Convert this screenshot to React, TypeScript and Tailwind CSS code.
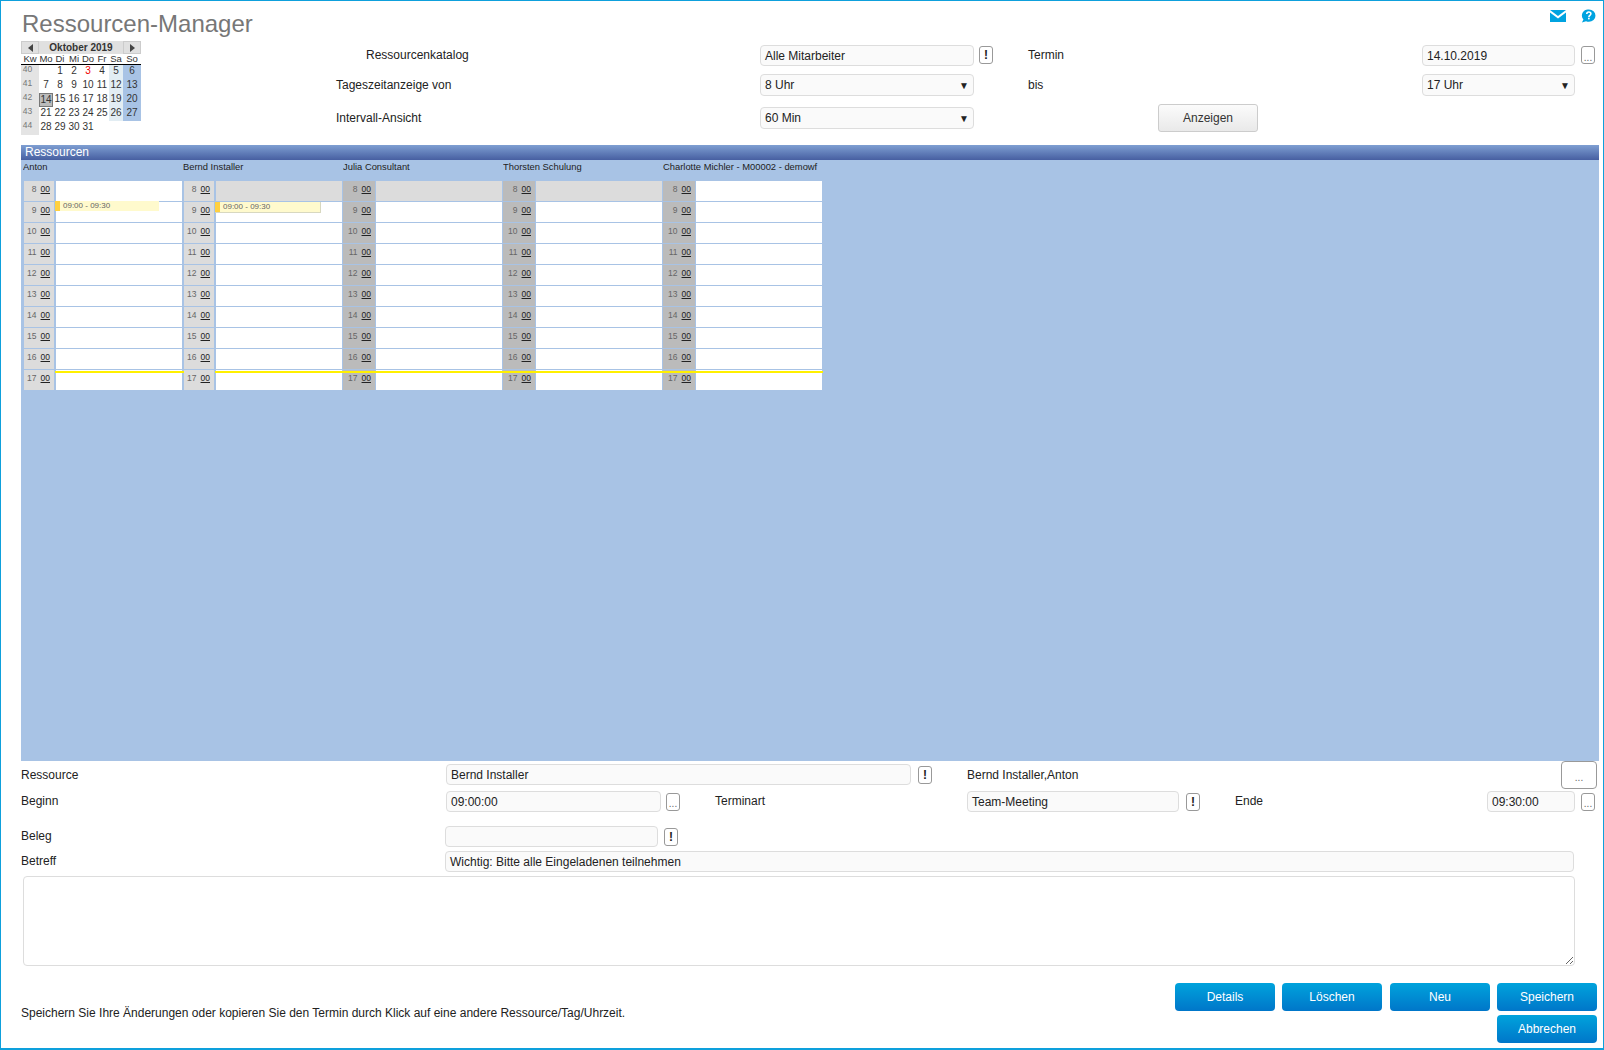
import React from 'react';

const WEEKS: { kw: number; days: (number | null)[] }[] = [
  { kw: 40, days: [null, 1, 2, 3, 4, 5, 6] },
  { kw: 41, days: [7, 8, 9, 10, 11, 12, 13] },
  { kw: 42, days: [14, 15, 16, 17, 18, 19, 20] },
  { kw: 43, days: [21, 22, 23, 24, 25, 26, 27] },
  { kw: 44, days: [28, 29, 30, 31, null, null, null] },
];

const HOURS = [8, 9, 10, 11, 12, 13, 14, 15, 16, 17];

const RESOURCES = [
  { name: 'Anton', light: true, firstBusy: false, event: 'plain' },
  { name: 'Bernd Installer', light: true, firstBusy: true, event: 'shadow' },
  { name: 'Julia Consultant', light: false, firstBusy: true, event: '' },
  { name: 'Thorsten Schulung', light: false, firstBusy: true, event: '' },
  { name: 'Charlotte Michler - M00002 - demowf', light: false, firstBusy: false, event: '' },
];

const Calendar = () => (
  <div className="w-[120px] shrink-0 text-[#333]">
    <div className="flex h-[13px] bg-[#e0e0e0]">
      <div className="flex h-[13px] w-[18px] items-center justify-center border border-[#ccc]">
        <div className="h-0 w-0 border-y-[4px] border-r-[5px] border-y-transparent border-r-[#444]" />
      </div>
      <div className="flex-1 text-center text-[10px] font-bold leading-[13px]">Oktober 2019</div>
      <div className="flex h-[13px] w-[18px] items-center justify-center border border-[#ccc]">
        <div className="h-0 w-0 border-y-[4px] border-l-[5px] border-y-transparent border-l-[#444]" />
      </div>
    </div>
    <div className="grid h-[11px] grid-cols-[18px_repeat(6,14px)_18px] border-b border-black text-center text-[9.5px] leading-[10px]">
      {['Kw', 'Mo', 'Di', 'Mi', 'Do', 'Fr', 'Sa', 'So'].map(d => <div key={d}>{d}</div>)}
    </div>
    {WEEKS.map((w, ri) => (
      <div key={w.kw} className="grid h-[14px] grid-cols-[18px_repeat(6,14px)_18px] text-center text-[10px] leading-[12px]">
        <div className="bg-[#e4e4e4] pr-[5px] text-[8.5px] leading-[9px] text-[#777]">{w.kw}</div>
        {w.days.map((d, i) => {
          let cls = '';
          if (ri < 4 && i === 5) cls = 'bg-[#e2edf3]';
          if (ri < 4 && i === 6) cls = 'bg-[#a8c3e5]';
          if (d === 14) cls = 'bg-[#bbbbbb] border border-[#777] leading-[11px]';
          if (d === 3) cls = 'text-[#f00000]';
          return <div key={i} className={cls}>{d}</div>;
        })}
      </div>
    ))}
  </div>
);

const Field = ({ value, className }: { value?: string; className: string }) => (
  <div className={`h-[21px] shrink-0 truncate rounded-[4px] border border-[#dddddd] bg-[#fafafa] pl-[4px] text-[12px] leading-[20px] text-[#222] ${className}`}>
    {value}
  </div>
);

const SelectBox = ({ value, className }: { value: string; className: string }) => (
  <div className={`flex h-[22px] items-center justify-between rounded-[4px] border border-[#dddddd] bg-[#fafafa] pl-[4px] pr-[4px] text-[12px] text-[#222] ${className}`}>
    <span>{value}</span>
    <span className="text-[10px] text-[#222]">▼</span>
  </div>
);

const MiniButton = ({ label, className = '' }: { label: string; className?: string }) => (
  <div
    className={`flex h-[18px] w-[14px] shrink-0 items-center justify-center rounded-[3px] border border-[#999] bg-white ${
      label === '!' ? 'text-[12px] font-bold text-[#222]' : 'pt-[4px] text-[10px] text-[#666]'
    } ${className}`}
  >
    {label}
  </div>
);

const BlueButton = ({ label, className = '' }: { label: string; className?: string }) => (
  <div className={`flex h-[28px] w-[100px] items-center justify-center rounded-[4px] bg-gradient-to-b from-[#00a3dc] to-[#0076c9] text-[12px] text-white ${className}`}>
    {label}
  </div>
);

const ResourceColumn = ({ res, index }: { res: (typeof RESOURCES)[number]; index: number }) => {
  const first = index < 2;
  return (
    <div className={`relative shrink-0 ${index === 1 ? 'w-[159px]' : 'w-[160px]'}`}>
      <div className={`h-[21px] truncate pt-[1px] text-[9.4px] leading-[12px] text-[#222] ${first ? '-ml-px' : ''}`}>
        {res.name}
      </div>
      <div className="flex flex-col gap-px">
        {HOURS.map(h => (
          <div key={h} className="flex h-[20px]">
            <div
              className={`flex shrink-0 justify-end gap-[4px] pr-[4px] text-[8.5px] leading-[16px] text-[#666] ${
                first ? 'mr-[2px] w-[30px] bg-[#dcdcdc]' : 'mr-px w-[32px] bg-[#bbbbbb]'
              }`}
            >
              <span>{h}</span>
              <span className="text-[#222] underline">00</span>
            </div>
            <div className={`relative flex-1 ${index === 0 ? 'mr-[2px]' : 'mr-px'} ${h === 8 && res.firstBusy ? 'bg-[#dcdcdc]' : 'bg-white'}`}>
              {h === 9 && res.event && (
                <div
                  className={`absolute -left-px z-10 flex bg-[#fffacd] text-[8px] text-[#666] ${
                    res.event === 'shadow' ? 'top-0 h-[11px] w-[106px] border-r border-b border-[#d8d8c0]' : '-top-px h-[10px] w-[104px]'
                  }`}
                >
                  <div className="h-full w-[5px] bg-[#ffd040]" />
                  <span className="pl-[3px] leading-[9px]">09:00 - 09:30</span>
                </div>
              )}
            </div>
          </div>
        ))}
      </div>
      <div className={`absolute right-0 top-[211px] z-10 h-[2px] bg-[#fff000] ${first ? 'left-[31px]' : 'left-0'}`} />
    </div>
  );
};

export default function App() {
  return (
    <div className="flex h-[1050px] w-[1604px] flex-col overflow-hidden border border-b-2 border-[#0ea0dc] bg-white pl-[20px] pr-[4px] [font-family:'Liberation_Sans',Arial,sans-serif]">
      {/* title */}
      <div className="flex h-[40px] shrink-0 justify-between">
        <div className="pl-px pt-[8px] text-[24px] leading-[29px] text-[#777]">Ressourcen-Manager</div>
        <div className="flex items-start gap-[14px] pr-[3px] pt-[9px]">
          <svg width="16" height="12" viewBox="0 0 16 12">
            <path fill="#00a3e0" d="M0 0h16L8 6zM0 2.4l8 6 8-6V12H0z" />
          </svg>
          <svg width="16" height="14" viewBox="0 0 17 15" className="-mt-[1px]">
            <path fill="#00a3e0" d="M9.5 0.5a7 6.6 0 0 1 0 13.2c-1.1 0-2.2-.3-3.1-.7L2 14.5l1.6-3.2a6.6 6.6 0 0 1 5.9-10.8z" />
            <path fill="none" stroke="#fff" strokeWidth="1.7" d="M7.2 5.4c0-1.4 1-2.1 2.2-2.1s2.2.8 2.2 1.9c0 1.6-2.1 1.7-2.1 3.3" />
            <rect x="8.5" y="9.3" width="1.8" height="1.8" fill="#fff" />
          </svg>
        </div>
      </div>

      {/* top filter area */}
      <div className="flex h-[104px] shrink-0">
        <Calendar />
        <div className="grid flex-1 grid-cols-[424px_214px_54px_394px_153px_20px] grid-rows-[29px_33px_25px] items-start pl-[195px] pt-[4px] text-[12px] text-[#222]">
          <div className="pl-[30px] leading-[20px]">Ressourcenkatalog</div>
          <div className="flex"><Field value="Alle Mitarbeiter" className="w-[214px]" /><MiniButton label="!" className="ml-[5px] mt-px" /></div>
          <div />
          <div className="leading-[20px]">Termin</div>
          <Field value="14.10.2019" className="w-[153px]" />
          <MiniButton label="..." className="ml-[6px] mt-px" />

          <div className="leading-[22px]">Tageszeitanzeige von</div>
          <SelectBox value="8 Uhr" className="w-[214px]" />
          <div />
          <div className="leading-[22px]">bis</div>
          <SelectBox value="17 Uhr" className="w-[153px]" />
          <div />

          <div className="leading-[22px]">Intervall-Ansicht</div>
          <SelectBox value="60 Min" className="w-[214px]" />
          <div />
          <div className="-mt-[3px] pl-[130px]">
            <div className="flex h-[28px] w-[100px] items-center justify-center rounded-[3px] border border-[#cccccc] bg-gradient-to-b from-[#fbfbfb] to-[#e9e9e9] text-[#333]">
              Anzeigen
            </div>
          </div>
        </div>
      </div>

      {/* resources */}
      <div className="h-[15px] shrink-0 bg-gradient-to-b from-[#7f9fd2] to-[#475fa1] pl-[4px] text-[12px] leading-[14px] text-white">
        Ressourcen
      </div>
      <div className="flex h-[601px] shrink-0 items-start bg-[#a8c3e5] pl-[3px]">
        {RESOURCES.map((r, i) => <ResourceColumn key={r.name} res={r} index={i} />)}
      </div>

      {/* detail form */}
      <div className="flex h-[28px] shrink-0 items-center pr-[2px] text-[12px] text-[#222]">
        <div className="w-[425px] shrink-0">Ressource</div>
        <Field value="Bernd Installer" className="-mt-px w-[465px]" />
        <MiniButton label="!" className="ml-[7px]" />
        <div className="ml-[35px]">Bernd Installer,Anton</div>
        <div className="ml-auto flex h-[28px] w-[36px] items-center justify-center rounded-[4px] border border-[#999] bg-white pt-[4px] text-[10px] text-[#666]">...</div>
      </div>
      <div className="mt-[2px] flex h-[21px] shrink-0 items-center text-[12px] text-[#222]">
        <div className="w-[425px] shrink-0 pb-[2px]">Beginn</div>
        <Field value="09:00:00" className="w-[215px]" />
        <MiniButton label="..." className="ml-[5px]" />
        <div className="ml-[35px] w-[252px] pb-[2px]">Terminart</div>
        <Field value="Team-Meeting" className="w-[212px]" />
        <MiniButton label="!" className="ml-[7px]" />
        <div className="ml-[35px] w-[252px] pb-[2px]">Ende</div>
        <Field value="09:30:00" className="w-[88px]" />
        <MiniButton label="..." className="ml-[6px]" />
      </div>
      <div className="mt-[14px] flex h-[21px] shrink-0 items-center text-[12px] text-[#222]">
        <div className="w-[424px] shrink-0 pb-[2px]">Beleg</div>
        <Field className="w-[213px]" />
        <MiniButton label="!" className="ml-[6px]" />
      </div>
      <div className="mt-[4px] flex h-[21px] shrink-0 items-center text-[12px] text-[#222]">
        <div className="w-[424px] shrink-0 pb-[2px]">Betreff</div>
        <Field value="Wichtig: Bitte alle Eingeladenen teilnehmen" className="w-[1129px]" />
      </div>
      <textarea className="ml-[2px] mt-[4px] h-[90px] w-[1552px] shrink-0 rounded-[4px] border border-[#dddddd] bg-white" />

      <div className="mt-[17px] flex shrink-0 justify-between pr-[2px]">
        <div className="pt-[22px] text-[12px] leading-[16px] text-[#222]">
          Speichern Sie Ihre Änderungen oder kopieren Sie den Termin durch Klick auf eine andere Ressource/Tag/Uhrzeit.
        </div>
        <div className="flex flex-col items-end gap-[4px]">
          <div className="flex gap-[7px]">
            <BlueButton label="Details" />
            <BlueButton label="Löschen" />
            <BlueButton label="Neu" className="ml-px" />
            <BlueButton label="Speichern" />
          </div>
          <BlueButton label="Abbrechen" />
        </div>
      </div>
    </div>
  );
}
